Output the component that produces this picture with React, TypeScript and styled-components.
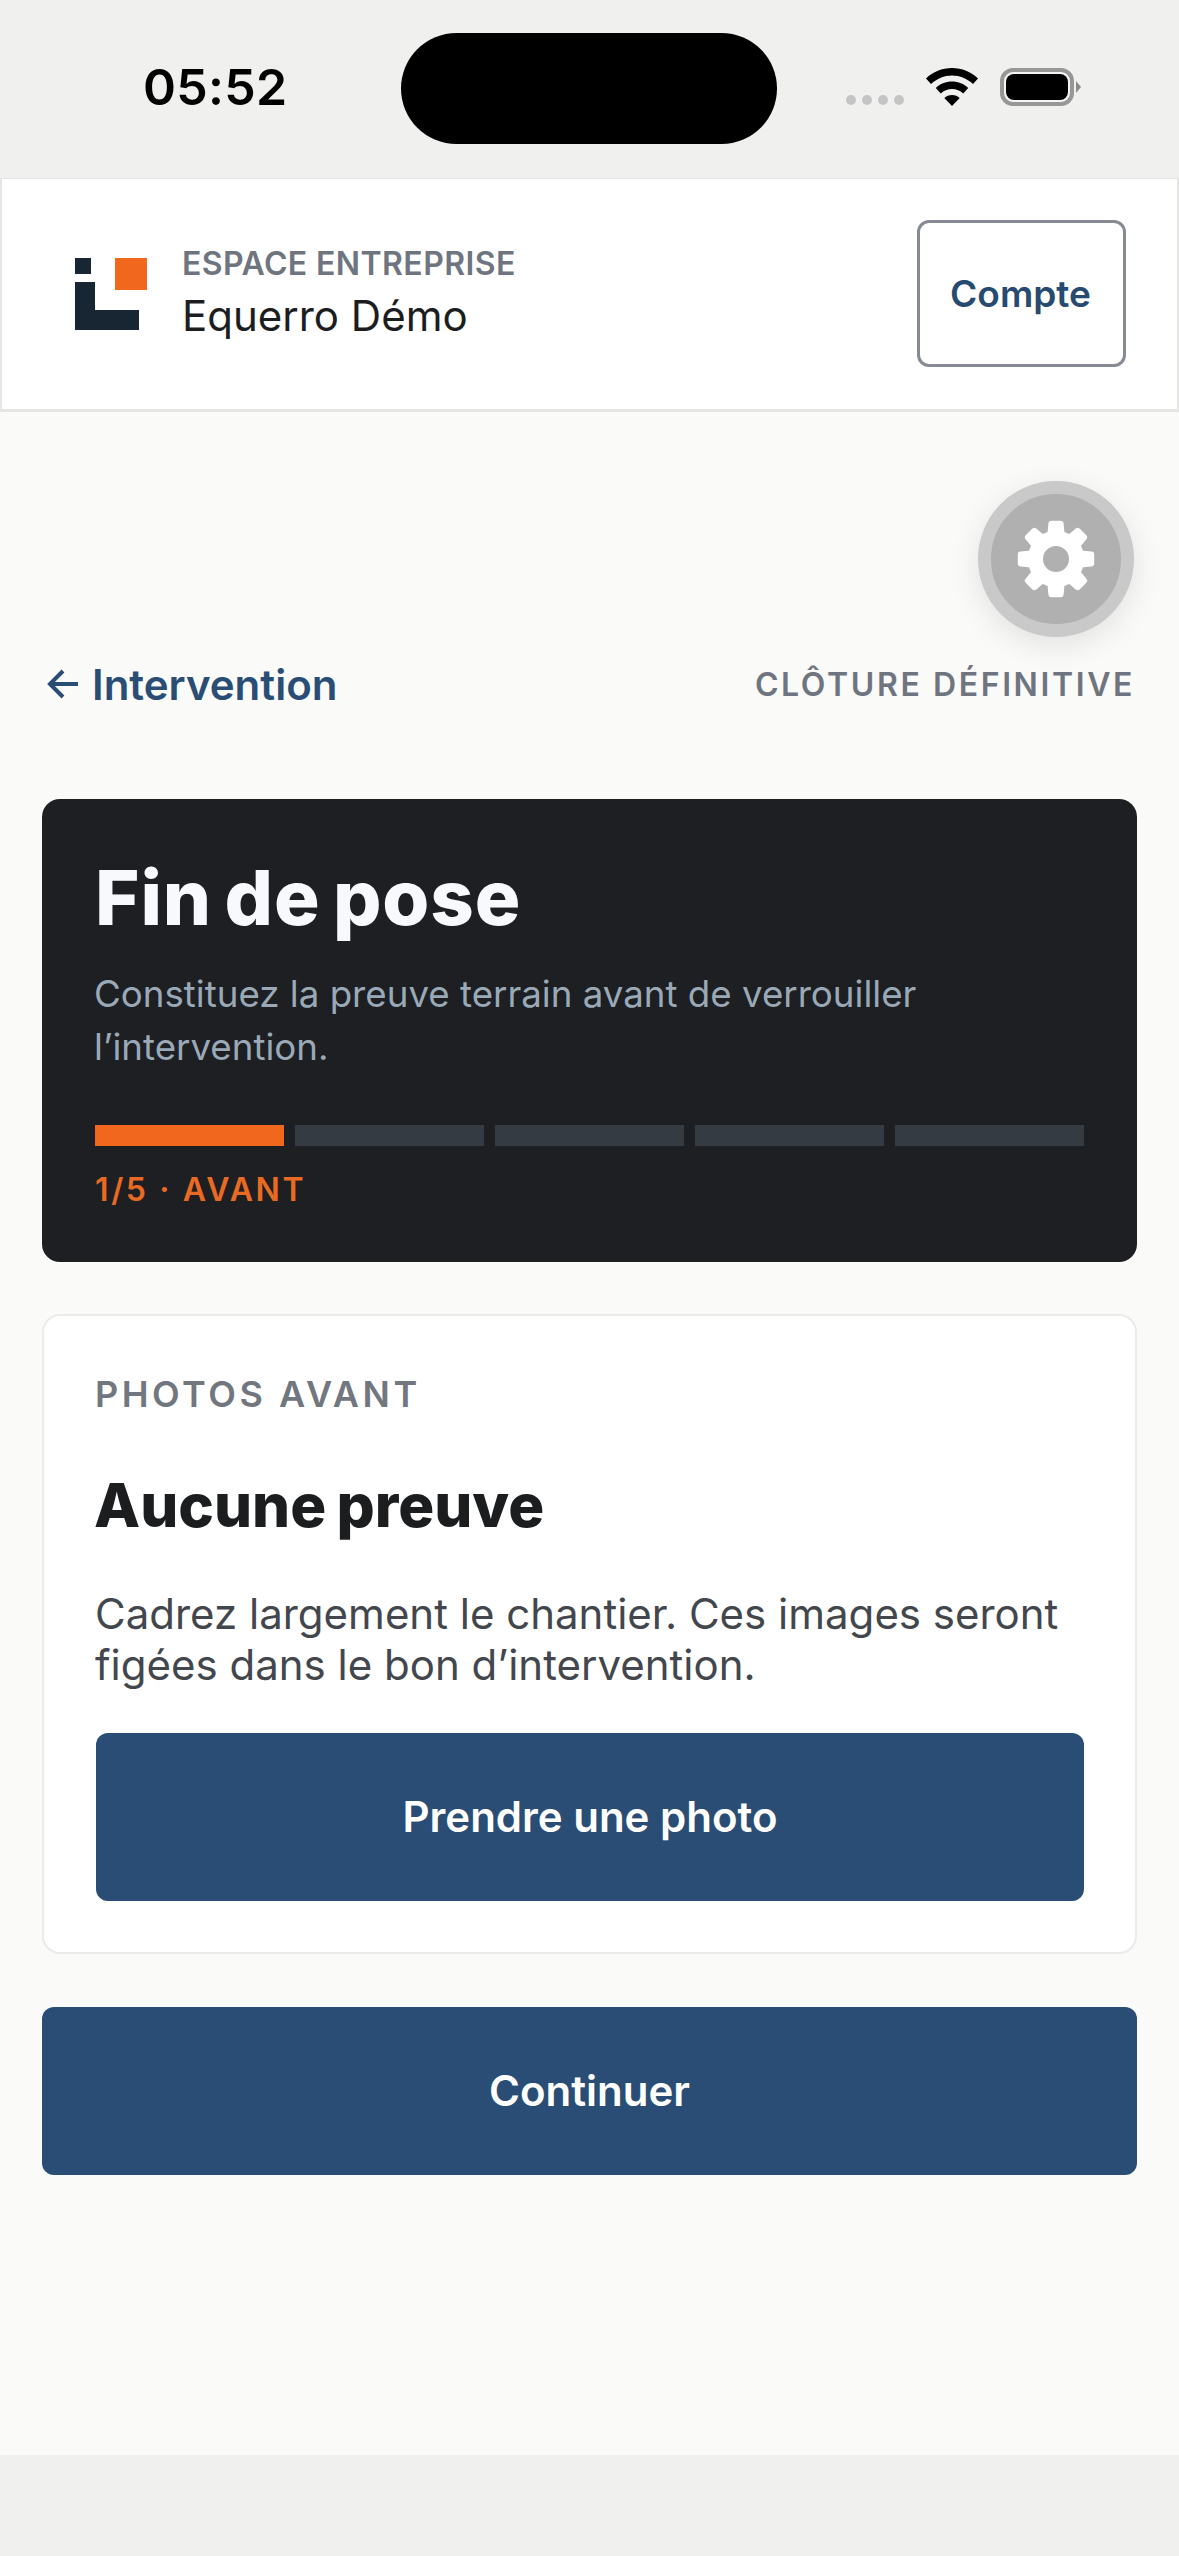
import styled, { createGlobalStyle } from "styled-components";

const GlobalStyle = createGlobalStyle`
  html, body {
    margin: 0;
    padding: 0;
    background: #f0f0ee;
  }

  * {
    box-sizing: border-box;
  }

  body {
    font-family: Inter, "Noto Sans", sans-serif;
    -webkit-font-smoothing: antialiased;
  }
`;

const Screen = styled.div`
  width: 1179px;
  height: 2556px;
  overflow: hidden;
  display: flex;
  flex-direction: column;
  background: #f0f0ee;
`;

/* status bar */
const StatusBar = styled.div`
  height: 178px;
  flex: none;
  position: relative;
  padding: 0 105px 0 143px;
  display: flex;
  align-items: flex-start;
  justify-content: space-between;
`;

const Clock = styled.span`
  margin-top: 57px;
  font-size: 50px;
  line-height: 60px;
  font-weight: 600;
  letter-spacing: 0.3px;
  color: #000;
`;

const Island = styled.div`
  position: absolute;
  left: 401px;
  top: 33px;
  width: 376px;
  height: 111px;
  border-radius: 56px;
  background: #000;
`;

const StatusIcons = styled.div`
  margin-top: 68px;
  display: flex;
  align-items: flex-start;
  gap: 22px;
`;

const SignalDots = styled.div`
  margin-top: 27px;
  display: flex;
  gap: 6px;
`;

const SignalDot = styled.span`
  width: 10px;
  height: 10px;
  border-radius: 50%;
  background: #c4c4c4;
`;

const Battery = styled.div`
  position: relative;
  width: 74px;
  height: 38px;
  border: 4px solid #979797;
  border-radius: 13px;
  padding: 2px;
  background: #f4f4f2;

  &::before {
    content: "";
    display: block;
    width: 100%;
    height: 100%;
    border-radius: 8px;
    background: #000;
  }

  &::after {
    content: "";
    position: absolute;
    right: -11px;
    top: 9px;
    width: 5px;
    height: 12px;
    background: #8a8a8a;
    clip-path: polygon(0 0, 100% 50%, 0 100%);
  }
`;

/* app header */
const Header = styled.header`
  height: 234px;
  flex: none;
  display: flex;
  align-items: center;
  justify-content: space-between;
  padding: 0 51px 1px 73px;
  background: #fff;
  border: 2px solid #e5e5e3;
  border-width: 1px 2px 3px;
`;

const Brand = styled.div`
  display: flex;
  align-items: center;
  gap: 35px;
`;

const BrandText = styled.div`
  display: flex;
  flex-direction: column;
  margin-top: -3px;
`;

const BrandKicker = styled.span`
  font-size: 32px;
  line-height: 46px;
  font-weight: 600;
  letter-spacing: 0.4px;
  color: #6f7580;
`;

const BrandName = styled.span`
  font-size: 42px;
  line-height: 57px;
  font-weight: 400;
  color: #1c1d1f;
`;

const AccountButton = styled.button`
  width: 209px;
  height: 147px;
  padding: 0 2px 0 0;
  background: #fff;
  border: 3px solid #858a93;
  border-radius: 12px;
  font: 600 37px Inter, sans-serif;
  color: #264a70;
`;

/* page content */
const Main = styled.main`
  height: 2043px;
  flex: none;
  position: relative;
  padding: 0 42px;
  display: flex;
  flex-direction: column;
  background: #fafaf8;
`;

const GearButton = styled.div`
  position: absolute;
  right: 45px;
  top: 69px;
  width: 156px;
  height: 156px;
  border-radius: 50%;
  display: flex;
  align-items: center;
  justify-content: center;
  background: #b0b0b0;
  border: 13px solid #c9c9c9;
  box-shadow: 0 8px 30px rgba(0, 0, 0, 0.1);
`;

const TopRow = styled.div`
  margin-top: 245px;
  height: 54px;
  display: flex;
  align-items: center;
  justify-content: space-between;
  padding: 0 2px 0 5px;
`;

const BackLink = styled.a`
  display: flex;
  align-items: center;
  gap: 13px;
  font-size: 42px;
  font-weight: 600;
  color: #2a4d75;
`;

const StepTag = styled.span`
  font-size: 32px;
  font-weight: 600;
  letter-spacing: 2.6px;
  color: #6f7580;
`;

const HeroCard = styled.section`
  margin-top: 88px;
  height: 463px;
  padding: 53px 53px 0;
  border-radius: 18px;
  background: #1d1f22;
`;

const HeroTitle = styled.h1`
  margin: 0;
  font-size: 76px;
  line-height: 90px;
  font-weight: 800;
  letter-spacing: 0.9px;
  word-spacing: -5px;
  color: #f7f9fc;
`;

const HeroText = styled.p`
  margin: 25px 0 0 -1px;
  font-size: 36.7px;
  line-height: 53px;
  font-weight: 400;
  color: #9aa9b8;
`;

const Progress = styled.div`
  margin-top: 52px;
  display: grid;
  grid-template-columns: repeat(5, 1fr);
  gap: 11px;
`;

const ProgressStep = styled.span<{ $active?: boolean }>`
  height: 21px;
  background: ${(p) => (p.$active ? "#f1671d" : "#353b42")};
`;

const ProgressLabel = styled.div`
  margin-top: 24px;
  font-size: 32px;
  line-height: 40px;
  font-weight: 600;
  letter-spacing: 2.6px;
  color: #e96a22;
`;

const ProofCard = styled.section`
  margin-top: 52px;
  height: 640px;
  padding: 54px 51px 0 52px;
  background: #fff;
  border: 2px solid #ebebe9;
  border-radius: 18px;
`;

const ProofLabel = styled.div`
  margin-left: -1px;
  font-size: 36px;
  line-height: 48px;
  font-weight: 600;
  letter-spacing: 3.5px;
  color: #71767f;
`;

const ProofTitle = styled.h2`
  margin: 51px 0 0 -2px;
  font-size: 60px;
  line-height: 72px;
  font-weight: 800;
  letter-spacing: 0;
  word-spacing: -3px;
  color: #1c1d1f;
`;

const ProofText = styled.p`
  margin: 47px 0 0 -1px;
  font-size: 42px;
  line-height: 51px;
  font-weight: 400;
  color: #43474d;
`;

const PrimaryButton = styled.button<{ $spaced?: boolean }>`
  display: block;
  width: 100%;
  height: 168px;
  margin-top: ${(p) => (p.$spaced ? "53px" : "43px")};
  padding: 0 0 2px;
  border: 0;
  border-radius: 12px;
  background: #2a4d75;
  color: #fff;
  font: 600 42px Inter, sans-serif;
`;

const BottomSpace = styled.div`
  flex: 1;
  background: #f0f0ee;
`;

function WifiIcon() {
  return (
    <svg width="52" height="38" viewBox="0 0 52 38" fill="#000">
      <path d="M26 0C16 0 7 3.8 0 10.5l5 5.6C11 10.5 18 7.5 26 7.5s15 3 21 8.6l5-5.6C45 3.8 36 0 26 0Z" />
      <path d="M26 13.5c-6.3 0-12 2.4-16.2 6.4l5 5.6c3-2.8 6.9-4.5 11.2-4.5s8.2 1.7 11.2 4.5l5-5.6c-4.2-4-9.9-6.4-16.2-6.4Z" />
      <path d="M26 27c-3 0-5.700 1.100-7.700 3L26 38l7.700-8c-2-1.900-4.700-3-7.700-3Z" />
    </svg>
  );
}

function LogoMark() {
  return (
    <svg width="72" height="72" viewBox="0 0 72 72">
      <rect x="0" y="0" width="16" height="16" fill="#182633" />
      <rect x="40" y="0" width="32" height="32" fill="#f1671d" />
      <path d="M0 24h20v28h44v20H0Z" fill="#182633" />
    </svg>
  );
}

function BackArrow() {
  return (
    <svg width="32" height="30" viewBox="0 0 32 30" fill="none" stroke="#2a4d75" strokeWidth="4">
      <path d="M16 2 3 15l13 13M3 15h28" />
    </svg>
  );
}

// eight rounded teeth around a centre hole
function gearOutline() {
  const points: string[] = [];
  const teeth = 8;
  for (let i = 0; i < teeth; i++) {
    const mid = (i * Math.PI * 2) / teeth - Math.PI / 2;
    [
      [-0.22, 25.5],
      [-0.13, 35.5],
      [0.13, 35.5],
      [0.22, 25.5],
    ].forEach(([offset, radius]) => {
      const angle = mid + offset;
      points.push(`${(radius * Math.cos(angle)).toFixed(2)} ${(radius * Math.sin(angle)).toFixed(2)}`);
    });
  }
  return `M${points.join("L")}Z`;
}

function GearIcon() {
  return (
    <svg width="80" height="80" viewBox="-40 -40 80 80">
      <path d={gearOutline()} fill="#fff" stroke="#fff" strokeWidth="6" strokeLinejoin="round" />
      <circle r="13" fill="#b0b0b0" />
    </svg>
  );
}

export default function App() {
  return (
    <Screen>
      <GlobalStyle />
      <StatusBar>
        <Clock>05:52</Clock>
        <Island />
        <StatusIcons>
          <SignalDots>
            <SignalDot />
            <SignalDot />
            <SignalDot />
            <SignalDot />
          </SignalDots>
          <WifiIcon />
          <Battery />
        </StatusIcons>
      </StatusBar>

      <Header>
        <Brand>
          <LogoMark />
          <BrandText>
            <BrandKicker>ESPACE ENTREPRISE</BrandKicker>
            <BrandName>Equerro Démo</BrandName>
          </BrandText>
        </Brand>
        <AccountButton>Compte</AccountButton>
      </Header>

      <Main>
        <GearButton>
          <GearIcon />
        </GearButton>

        <TopRow>
          <BackLink>
            <BackArrow />
            Intervention
          </BackLink>
          <StepTag>CLÔTURE DÉFINITIVE</StepTag>
        </TopRow>

        <HeroCard>
          <HeroTitle>Fin de pose</HeroTitle>
          <HeroText>
            Constituez la preuve terrain avant de verrouiller
            <br />
            l’intervention.
          </HeroText>
          <Progress>
            <ProgressStep $active />
            <ProgressStep />
            <ProgressStep />
            <ProgressStep />
            <ProgressStep />
          </Progress>
          <ProgressLabel>1/5 · AVANT</ProgressLabel>
        </HeroCard>

        <ProofCard>
          <ProofLabel>PHOTOS AVANT</ProofLabel>
          <ProofTitle>Aucune preuve</ProofTitle>
          <ProofText>
            Cadrez largement le chantier. Ces images seront
            <br />
            figées dans le bon d’intervention.
          </ProofText>
          <PrimaryButton>Prendre une photo</PrimaryButton>
        </ProofCard>

        <PrimaryButton $spaced>Continuer</PrimaryButton>
      </Main>
      <BottomSpace />
    </Screen>
  );
}
